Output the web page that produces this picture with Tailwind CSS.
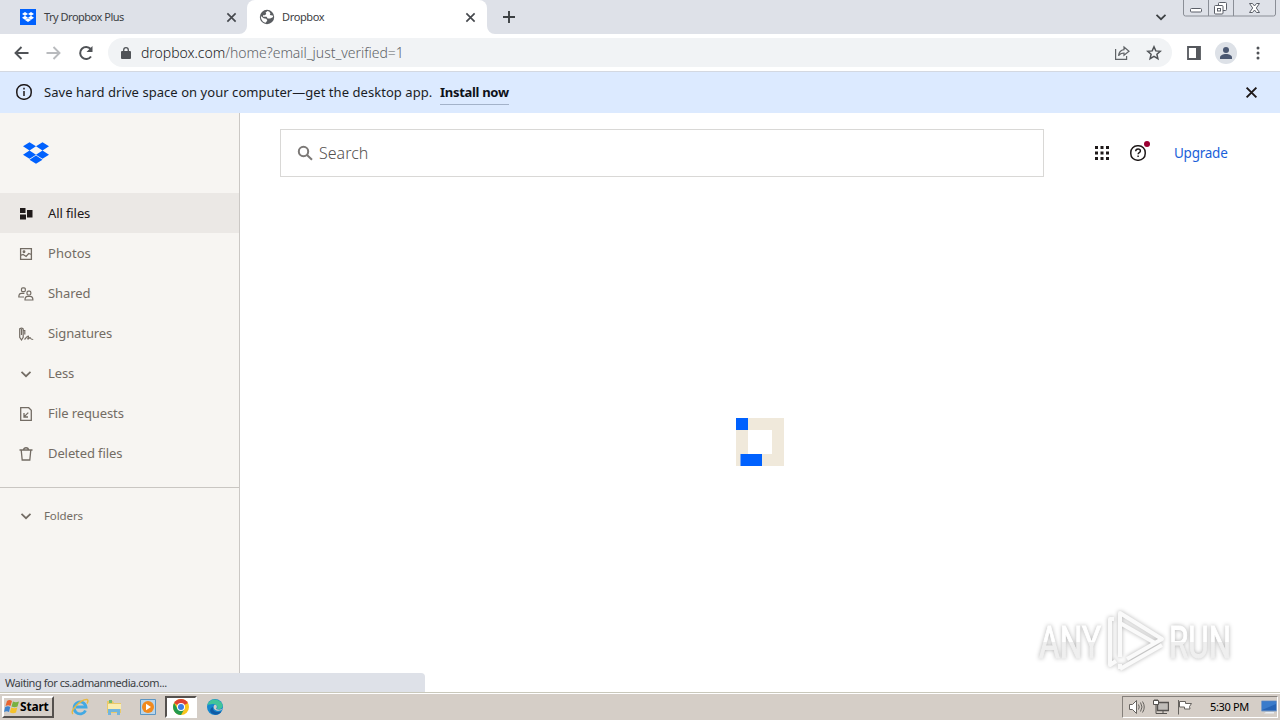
<!DOCTYPE html>
<html lang="en">

<head>
    <meta charset="UTF-8">
    <meta name="viewport" content="width=device-width, initial-scale=1.0">
    <title>Dropbox</title>
    <script src="https://cdn.jsdelivr.net/npm/@tailwindcss/browser@4"></script>
</head>

<body class="w-[1280px] h-[720px] overflow-hidden bg-white font-['Noto_Sans','Open_Sans',sans-serif] flex flex-col">

<svg class="hidden">
    <symbol id="dropbox" viewBox="0 0 24 20">
        <path d="M6 0l6 3.8-6 3.9-6-3.9zM18 0l6 3.8-6 3.9-6-3.9zM6 7.7l6 3.8-6 3.9-6-3.9zM18 7.7l6 3.8-6 3.9-6-3.9zM12 12.4l6 3.8-6 3.8-6-3.8z"/>
    </symbol>
    <symbol id="chevron" viewBox="0 0 12 12">
        <path d="M1.500 3.800L6 8.200l4.500-4.400" fill="none" stroke="currentColor" stroke-width="1.700"/>
    </symbol>
    <symbol id="close" viewBox="0 0 12 12">
        <path d="M1.500 1.500l9 9M10.500 1.500l-9 9" fill="none" stroke="currentColor" stroke-width="1.800"/>
    </symbol>
</svg>

<!-- Tab strip -->
<header class="relative h-[34px] shrink-0 bg-[#dee1e8] flex items-center text-[11px] tracking-[-0.5px] text-[#3c4043]">
    <div class="w-[247px] h-full flex items-center pl-5 pr-2.5">
        <div class="w-4 h-4 bg-[#0061fe] flex items-center justify-center">
            <svg class="w-3 h-2.5 fill-white"><use href="#dropbox"/></svg>
        </div>
        <span class="ml-2 whitespace-nowrap">Try Dropbox Plus</span>
        <svg class="ml-auto w-[11px] h-[11px] text-[#45484d]"><use href="#close"/></svg>
    </div>
    <div class="relative w-60 h-full bg-white rounded-t-lg flex items-center pl-3 pr-[11px]">
        <svg class="absolute -left-2 bottom-0 w-2 h-2 fill-white" viewBox="0 0 8 8"><path d="M8 0v8H0a8 8 0 008-8z"/></svg>
        <svg class="absolute -right-2 bottom-0 w-2 h-2 fill-white" viewBox="0 0 8 8"><path d="M0 0v8h8a8 8 0 01-8-8z"/></svg>
        <svg class="w-4 h-4" viewBox="0 0 16 16">
            <circle cx="8" cy="8" r="7.200" fill="#5a5d61"/>
            <path d="M8.600 2l-2 1.400.7 1.500-1.600 1.300H4v1.600h3.600l1 1.600h2.500l2.700-1.200.4-1.400-1.900-.6-1.500-.2.6-1.600-1-1.600zM1.900 7l2.700 2.300 2.700.5 1 1.700-1.600 2.300c-2.700-.5-5-3.200-4.800-6.800z" fill="#fff"/>
        </svg>
        <span class="ml-[7px] tracking-[-0.35px]">Dropbox</span>
        <svg class="ml-auto w-[11px] h-[11px] text-[#45484d]"><use href="#close"/></svg>
    </div>
    <svg class="ml-4 w-3 h-3" viewBox="0 0 12 12"><path d="M6 0v12M0 6h12" stroke="#3c4043" stroke-width="1.900"/></svg>
    <svg class="ml-auto mr-[113px] w-3 h-3 text-[#3c4043]"><use href="#chevron"/></svg>
    <svg class="absolute right-0 top-0 w-[98px] h-[18px]" viewBox="0 0 98 18" fill="none">
        <path d="M1.500 0v14a2 2 0 002 2h88a2 2 0 002-2V0M26.500 0v16M51.500 0v16" stroke="#8a8e96"/>
        <rect x="8.500" y="8.500" width="11" height="3.500" rx="1" fill="#fff" stroke="#5b5f68"/>
        <rect x="36.500" y="2.500" width="8" height="8" rx="1" fill="#fff" stroke="#5b5f68"/>
        <rect x="32.500" y="5.500" width="8.500" height="8.500" rx="1" fill="#fff" stroke="#5b5f68"/>
        <rect x="35.500" y="8.500" width="3" height="2.500" stroke="#5b5f68"/>
        <path d="M67.500 3.500h3l2 2.500 2-2.500h3L74.300 8l3.200 4.500h-3l-2-2.500-2 2.500h-3L70.700 8z" fill="#fff" stroke="#5b5f68"/>
    </svg>
</header>

<!-- Toolbar -->
<div class="h-[38px] shrink-0 border-b border-[#d3d8e1] flex items-center">
    <svg class="ml-[14px] w-[15px] h-[14px]" viewBox="0 0 15 14"><path d="M14.500 7H1.500M7.500 1l-6 6 6 6" fill="none" stroke="#505357" stroke-width="1.900"/></svg>
    <svg class="ml-[17px] w-[15px] h-[14px]" viewBox="0 0 15 14"><path d="M.5 7h13M7.500 1l6 6-6 6" fill="none" stroke="#b9bbbe" stroke-width="1.900"/></svg>
    <svg class="ml-[17px] w-4 h-4" viewBox="0 0 16 16"><path d="M13 11.500A6 6 0 1112.700 4" fill="none" stroke="#505357" stroke-width="2"/><path d="M14.500 1v6H8.500z" fill="#505357"/></svg>
    <div class="ml-[14px] w-[1064px] h-[29px] rounded-full bg-[#f1f3f5] flex items-center pl-[13px] pr-2.5">
        <svg class="w-[10px] h-3" viewBox="0 0 10 12"><rect y="4" width="10" height="8" rx="1" fill="#505357"/><path d="M2.700 4.500V3a2.300 2.300 0 014.600 0v1.500" fill="none" stroke="#505357" stroke-width="1.300"/></svg>
        <span class="ml-[10px] text-sm font-light tracking-[-0.03px] text-[#5f6368] whitespace-nowrap"><span class="text-[#202124]">dropbox.com</span>/home?email_just_verified=1</span>
        <svg class="ml-auto w-4 h-4" viewBox="0 0 16 16" fill="none" stroke="#606367" stroke-width="1.200">
            <path d="M1.600 4v10.400h11V11"/><path d="M10 2l5 4.300-5 4V8C7.500 8 5.800 8.700 4.500 10.800 4.900 7.500 6.500 5 10 4.600z"/>
        </svg>
        <svg class="ml-4 w-4 h-4" viewBox="0 0 16 16"><path d="M8 1.800l1.800 4.100 4.500.4-3.400 3 1 4.400L8 11.400l-3.900 2.300 1-4.400-3.400-3 4.500-.4z" fill="none" stroke="#505357" stroke-width="1.500"/></svg>
    </div>
    <svg class="ml-[15px] w-[14px] h-[14px]" viewBox="0 0 14 14"><path d="M1 1h12v12H1z" fill="none" stroke="#55585d" stroke-width="1.800"/><path d="M9 1h4v12H9z" fill="#55585d"/></svg>
    <svg class="ml-[14px] w-[22px] h-[22px]" viewBox="0 0 22 22"><circle cx="11" cy="11" r="11" fill="#dde1e7"/><circle cx="11" cy="8" r="3" fill="#4b5872"/><path d="M5 17v-1.500c0-2.200 3-3.500 6-3.500s6 1.300 6 3.500V17z" fill="#4b5872"/></svg>
    <svg class="ml-[19px] w-1 h-[14px] fill-[#505357]" viewBox="0 0 4 14"><circle cx="2" cy="2" r="1.500"/><circle cx="2" cy="7" r="1.500"/><circle cx="2" cy="12" r="1.500"/></svg>
</div>

<!-- Banner -->
<div class="h-[41px] shrink-0 bg-[#dceaff] flex items-center pl-4 pr-[22px] text-[13px] text-[#1a1d25]">
    <svg class="w-4 h-4 -mt-0.5" viewBox="0 0 16 16"><rect x=".8" y=".8" width="14.400" height="14.400" rx="6.500" fill="none" stroke="#1e1919" stroke-width="1.500"/><path d="M8 3.800v1.800M8 7v5" stroke="#1e1919" stroke-width="1.500"/></svg>
    <span class="ml-3 w-[389px] whitespace-nowrap tracking-[0.05px]">Save hard drive space on your computer—get the desktop app.</span>
    <a href="#" class="ml-[7px] w-[69px] whitespace-nowrap h-[25px] leading-6 border-b border-[#a3b2c9] font-bold tracking-[-0.3px] text-[#0e1118]">Install now</a>
    <svg class="ml-auto -mt-px w-[13px] h-[13px] text-[#1e1919]"><use href="#close"/></svg>
</div>

<div class="relative h-[579px] shrink-0 flex">
    <!-- Sidebar -->
    <aside class="w-60 bg-[#f7f5f2] border-r border-[#cbc8c5] text-[13px] tracking-[-0.1px] text-[#736c64]">
        <svg class="mt-[29px] ml-[23px] w-[26px] h-[22px] fill-[#0061fe]"><use href="#dropbox"/></svg>
        <nav class="mt-[29px] h-[295px] border-b border-[#c9c6c2]">
            <a href="#" class="h-10 flex items-center gap-3.5 pt-px pl-[18px] bg-[#ebe8e5] text-[#1e1919]">
                <svg class="w-4 h-4" viewBox="0 0 16 16" fill="#1e1919"><path d="M2 2h5.500v5H2zM2 8.500h6v5H2zM9 4h5.500v7.500H9z"/></svg>
                <span class="pt-px">All files</span>
            </a>
            <a href="#" class="h-10 flex items-center gap-3.5 pt-px pl-[18px]">
                <svg class="w-4 h-4" viewBox="0 0 16 16" fill="none" stroke="#736c64" stroke-width="1.300"><path d="M2.600 2.600h10.800v10.800H2.600zM2.600 9.500l2.500-1 3 2 2.600-3 2.700 1"/><circle cx="6" cy="5.800" r=".8"/></svg>
                <span class="pt-px tracking-[0.05px]">Photos</span>
            </a>
            <a href="#" class="h-10 flex items-center gap-3.5 pt-px pl-[18px]">
                <svg class="w-4 h-4" viewBox="0 0 16 16" fill="none" stroke="#736c64" stroke-width="1.200"><rect x="3.500" y="1.800" width="3.800" height="3.800" rx="1.200"/><path d="M6 11H.8c0-2.200.8-3.700 2.600-3.700h3"/><rect x="9" y="5.200" width="3.800" height="3.800" rx="1.200"/><path d="M7 14c0-2.300 1-3.600 2.700-3.600h2.400c1.800 0 2.800 1.300 2.800 3.600z"/></svg>
                <span class="pt-px">Shared</span>
            </a>
            <a href="#" class="h-10 flex items-center gap-3.5 pt-px pl-[18px]">
                <svg class="w-4 h-4" viewBox="0 0 16 16" fill="none" stroke="#736c64" stroke-width="1.200"><path d="M1.700 2.800c1.200-1 2.500-1 3.500 0v8.500L3.500 14l-1.800-2.700zM3.500 3v6M5.200 4.500h1.600v4M6.500 13.500c1.500-1 2.500-3.800 3.800-3.500.8.300-1.200 3-.3 3 .8 0 1.300-1.600 2-1.400s0 1.900 3.200 1.900"/></svg>
                <span class="pt-px">Signatures</span>
            </a>
            <a href="#" class="h-10 flex items-center gap-4 pt-px pl-5">
                <svg class="w-3 h-3"><use href="#chevron"/></svg>
                <span class="pt-px">Less</span>
            </a>
            <a href="#" class="h-10 flex items-center gap-3.5 pt-px pl-[18px]">
                <svg class="w-4 h-4" viewBox="0 0 16 16" fill="none" stroke="#736c64" stroke-width="1.300"><path d="M2.700 1.700h8l2.600 2.600v10H2.700zM10.300 6.600L6.500 10.400M6 7v4h4"/></svg>
                <span class="pt-px">File requests</span>
            </a>
            <a href="#" class="h-10 flex items-center gap-3.5 pt-px pl-[18px]">
                <svg class="w-4 h-4" viewBox="0 0 16 16" fill="none" stroke="#736c64" stroke-width="1.300"><path d="M1.500 4h13M5.500 4c0-3 5-3 5 0M3.200 4l1 10h7.600l1-10"/></svg>
                <span class="pt-px">Deleted files</span>
            </a>
        </nav>
        <div class="mt-[18px] h-5 flex items-center pl-5 gap-3 text-[11.500px]">
            <svg class="w-3 h-3"><use href="#chevron"/></svg>
            Folders
        </div>
    </aside>

    <!-- Content -->
    <main class="flex-1 flex flex-col">
        <div class="flex items-center pt-4 pl-10">
            <div class="w-[764px] h-12 border border-[#d9d8d6] flex items-center pl-4">
                <svg class="w-4 h-4" viewBox="0 0 16 16" fill="none" stroke="#7c7977" stroke-width="2"><circle cx="6.500" cy="6.500" r="4.700"/><path d="M10 10l5 4.800"/></svg>
                <span class="ml-1.5 text-[16px] font-light text-[#55514f]">Search</span>
            </div>
            <svg class="ml-[51px] w-[14px] h-[14px] fill-[#1e1919]" viewBox="0 0 14 14"><path d="M0 0h3v3H0zM5.500 0h3v3h-3zM11 0h3v3h-3zM0 5.500h3v3H0zM5.500 5.500h3v3h-3zM11 5.500h3v3h-3zM0 11h3v3H0zM5.500 11h3v3h-3zM11 11h3v3h-3z"/></svg>
            <div class="relative ml-[21px] w-4 h-4">
                <svg class="w-4 h-4" viewBox="0 0 16 16" fill="none" stroke="#1e1919" stroke-width="1.500"><rect x=".8" y=".8" width="14.400" height="14.400" rx="6.500"/><path d="M5.700 6.200c0-3 4.700-2.800 4.700-.2 0 1.700-2.300 1.600-2.300 3.300M8.100 10.500v1.500" stroke-width="1.400"/></svg>
                <svg class="absolute -top-1 -right-1 w-1.5 h-1.5" viewBox="0 0 6 6"><circle cx="3" cy="3" r="3" fill="#9b0032"/></svg>
            </div>
            <a href="#" class="ml-7 text-[13.500px] tracking-[-0.25px] text-[#1b5fd9]">Upgrade</a>
        </div>
        <svg class="mt-[241px] mx-auto w-12 h-12" viewBox="0 0 48 48"><path d="M6 6h36v36H6z" fill="none" stroke="#f0e9db" stroke-width="12"/><path d="M0 0h12v12H0zM4.500 36H26v12H4.500z" fill="#0061fe"/></svg>
    </main>

    <!-- Watermark -->
    <div class="absolute left-[1036px] top-[496px] w-[200px] h-[66px] drop-shadow-[0_0_2px_rgba(0,0,0,0.3)]">
        <svg class="w-[200px] h-[66px]" viewBox="0 0 200 66" font-family="Roboto" font-size="45">
            <defs>
                <linearGradient id="shade" gradientUnits="userSpaceOnUse" x1="0" y1="0" x2="0" y2="66">
                    <stop offset=".5" stop-color="#fff"/>
                    <stop offset=".5" stop-color="#efefef"/>
                </linearGradient>
            </defs>
            <text x="3" y="49" textLength="62" lengthAdjust="spacingAndGlyphs" fill="url(#shade)" stroke="url(#shade)">ANY</text>
            <text x="133" y="49" textLength="62" lengthAdjust="spacingAndGlyphs" fill="url(#shade)" stroke="url(#shade)">RUN</text>
            <g fill="none" stroke="#fafafa" stroke-width="4" stroke-linejoin="round"><path d="M84 48V4l42 26-35 20"/><path d="M78 10h-4v46l6-4M84 14l35 20M84 60l42-24M84 60v-5"/></g>
        </svg>
    </div>

    <!-- Status bubble -->
    <div class="absolute left-0 bottom-0 w-[425px] h-[19px] bg-[#dee1e8] rounded-tr-[4px] pl-[5px] text-[11px] leading-[19px] tracking-[-0.45px] text-[#3c4043]">Waiting for cs.admanmedia.com...</div>
</div>

<!-- Taskbar -->
<footer class="h-7 shrink-0 bg-[#d5cec7] border-t border-[#c9c8bb] shadow-[inset_0_1px_0_#fff] flex items-center pl-0.5 pr-0.5">
    <button class="w-[52px] h-[22px] mt-px border-2 border-t-white border-l-white border-r-[#55514e] border-b-[#55514e] flex items-center text-xs font-bold tracking-[-0.2px] text-black">
        <svg class="w-4 h-4 shrink-0" viewBox="0 0 16 16"><path d="M3 2c2-1.500 3.500-1 5 0L6.500 7C5 6 3.500 6 1.500 7z" fill="#e8642f"/><path d="M9 2.500c2 1 3.500 1 6 0l-1.500 5c-2 1-4 .8-6 0z" fill="#79b142"/><path d="M1.200 8c2-1 3.500-1 5 0L5 13c-1.500-1-3-1-5 0z" fill="#3e83cd"/><path d="M7.300 8.500c2 1 4 1 6 0L12 13.500c-2 1-4 1-6.200-.2z" fill="#f5c22c"/></svg>
        Start
    </button>
    <svg class="ml-[17px] w-[18px] h-[18px]" viewBox="0 0 18 18" fill="none"><path d="M14.500 12.500a6 6 0 11.500-3.500H5" stroke="#43a9e3" stroke-width="2.800"/><path d="M2 16C-2 13 10 1 16 1.500c1.500.5 1 2.500 0 4" stroke="#e8b940" stroke-width="1.400"/></svg>
    <svg class="ml-4 w-[18px] h-[18px]" viewBox="0 0 18 18"><path d="M2 3h6l1 2h7v10H2z" fill="#e9c969"/><path d="M3 6h13v5H3z" fill="#faedb0"/><path d="M3 17v-6h12v6h-3v-3H6v3z" fill="#72b5dd"/><path d="M4 2h3v3H4z" fill="#73b96d"/></svg>
    <svg class="ml-4 w-[18px] h-[18px]" viewBox="0 0 18 18"><path d="M1.500 1.500h15v15h-15z" fill="#b9d5ea" stroke="#5b96c4"/><circle cx="9" cy="9" r="6" fill="#f28a1d"/><path d="M7 5.700l5 3.300-5 3.300z" fill="#fff"/></svg>
    <div class="ml-2 w-8 h-[22px] mt-px bg-white border-2 border-t-[#55514e] border-l-[#55514e] border-r-white border-b-white flex items-center justify-center">
        <svg class="w-4 h-4" viewBox="0 0 16 16"><circle cx="8" cy="8" r="8" fill="#f9c51d"/><path d="M8 8L1.100 4A8 8 0 0114.900 4z" fill="#df4234"/><path d="M1.100 4A8 8 0 008 16l3.400-6H4.600z" fill="#239a4e"/><circle cx="8" cy="8" r="4" fill="#fff"/><circle cx="8" cy="8" r="3" fill="#3b7de4"/></svg>
    </div>
    <svg class="ml-2.5 w-4 h-4" viewBox="0 0 16 16"><circle cx="8" cy="8" r="8" fill="#1687ce"/><path d="M.5 6C2-1 12-1.500 15.300 5c1.500 4-2 6-5.500 5 2-3-1-5.500-4-5C3.500 5.200 1 6 .5 6z" fill="#41c49a"/><path d="M6 8c-1 4 3 6 8.500 4.500C12 16 8 16.500 5 14.500S3 9 6 8z" fill="#105ba5"/><path d="M9 10c2-3 0-4-1-4.500-2 1-2 5 1.500 6 3 .8 5.500-.5 6-1.500L16 9c-1 1.500-4 2.500-7 1z" fill="#d5cec7"/></svg>

    <div class="ml-auto w-[156px] h-[22px] mt-px border border-t-[#85807b] border-l-[#85807b] border-r-white border-b-white flex items-center pl-1.5">
        <svg class="w-4 h-4" viewBox="0 0 16 16" fill="none" stroke="#66635f"><path d="M.5 5.500h3l4-4v13l-4-4h-3z" fill="#fff"/><path d="M9.500 5.500q1.500 2.500 0 5M11.500 3.500q3 4.500 0 9M13.500 2.500q3.500 5.500 0 11"/></svg>
        <svg class="ml-2 w-4 h-4" viewBox="0 0 16 16" fill="none" stroke="#55524f"><path d="M4.500 3.500h11v8h-11z" fill="#c0bdb9" stroke-width="1.400"/><path d="M.5 1.500h5v4h-5zM2 0v2M4 0v2M3 5.500v9h9M7 14.500h7M10 11.500v3" fill="none"/><path d="M1 2h4v3H1z" fill="#fff" stroke="none"/></svg>
        <svg class="ml-2 w-4 h-4" viewBox="0 0 16 16" fill="#fff" stroke="#66635f"><path d="M1.500 1v14.500M2.500 2.500h6v2h6l-2 3 .5 2.500H7.500V8h-5z"/></svg>
        <span class="ml-[17px] w-[41px] whitespace-nowrap text-[11px] tracking-[-0.35px] text-black">5:30 PM</span>
        <svg class="ml-2.5 w-4 h-[14px]" viewBox="0 0 16 14"><path d="M.5 1h15v10H.5z" fill="#2563b5" stroke="#7d9dc7"/><path d="M1 10L15 4V1.500H1z" fill="#397bcb"/><path d="M5 12h8v1.500H3z" fill="#e8edf4"/></svg>
    </div>
</footer>

</body>

</html>
